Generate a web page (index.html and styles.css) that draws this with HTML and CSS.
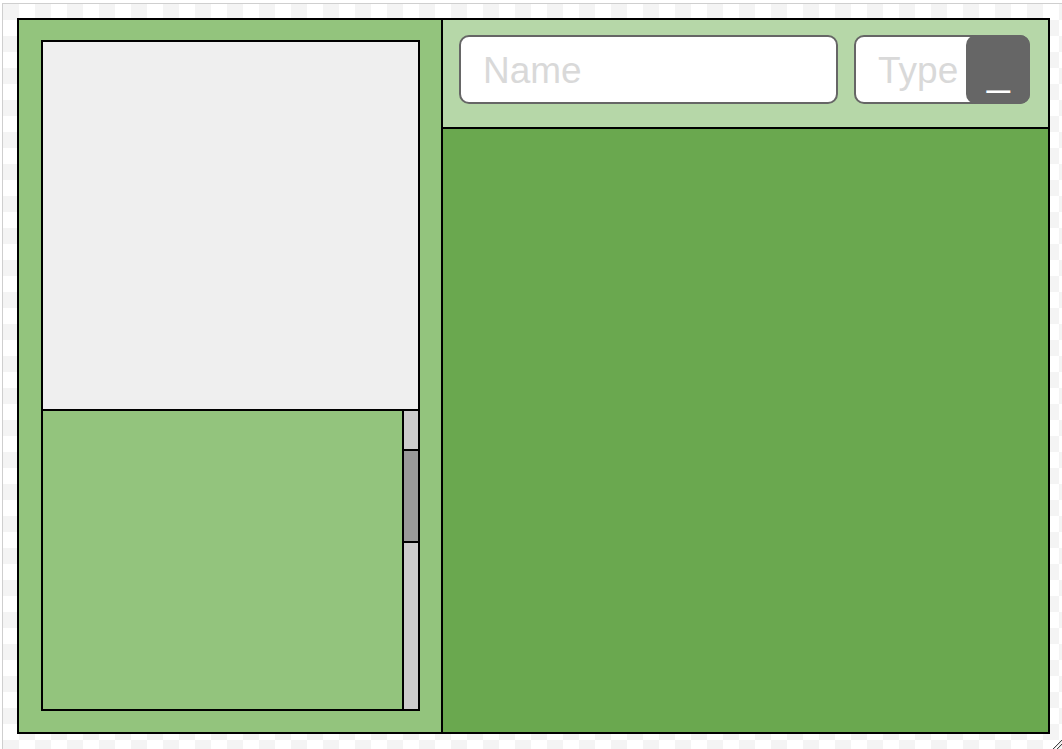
FILE: index.html
```html
<!DOCTYPE html>
<html>
<head>
<meta charset="utf-8">
<link rel="stylesheet" href="styles.css">
</head>
<body>
<div class="frame">
  <div class="app">
    <div class="left">
      <div class="box">
        <div class="preview"></div>
        <div class="list">
          <div class="list-body"></div>
          <div class="scrollbar"><div class="thumb"></div></div>
        </div>
      </div>
    </div>
    <div class="right">
      <div class="header">
        <div class="field name-field"><span class="placeholder">Name</span></div>
        <div class="field type-field"><span class="placeholder">Type</span><div class="drop-btn"><span class="underscore">_</span></div></div>
      </div>
      <div class="canvas"></div>
    </div>
  </div>
  <svg class="resizer" width="10" height="10" viewBox="0 0 10 10">
    <line x1="1" y1="10" x2="10" y2="1" stroke="#444" stroke-width="1"/>
    <line x1="2" y1="10" x2="10" y2="2" stroke="#ddd" stroke-width="1"/>
    <line x1="5" y1="10" x2="10" y2="5" stroke="#444" stroke-width="1"/>
    <line x1="6" y1="10" x2="10" y2="6" stroke="#ddd" stroke-width="1"/>
  </svg>
</div>
</body>
</html>
```
FILE: styles.css
```css
html, body {
  margin: 0;
  padding: 0;
  background: #fff;
  overflow: hidden;
}
.frame {
  position: relative;
  margin: 3px 0 0 2px;
  width: 1060px;
  height: 746px;
  box-sizing: border-box;
  border-left: 1px solid #cfcfcf;
  border-top: 1px solid #cfcfcf;
  padding: 14px 0 0 14px;
  background: repeating-conic-gradient(#ffffff 0 25%, #f4f4f4 0 50%) 0 0 / 32px 32px;
  font-family: "Liberation Sans", Arial, sans-serif;
}
.app {
  width: 1033px;
  height: 716px;
  box-sizing: border-box;
  border: 2px solid #000;
  display: flex;
}
.left {
  width: 424px;
  box-sizing: border-box;
  background: #93c47d;
  border-right: 2px solid #000;
  padding: 20px 21px 21px 22px;
  display: flex;
}
.box {
  flex: 1;
  border: 2px solid #000;
  display: flex;
  flex-direction: column;
}
.preview {
  height: 367px;
  background: #efefef;
  border-bottom: 2px solid #000;
}
.list {
  flex: 1;
  display: flex;
  background: #93c47d;
}
.list-body {
  flex: 1;
}
.scrollbar {
  width: 14px;
  border-left: 2px solid #000;
  background: #cccccc;
}
.thumb {
  margin-top: 38px;
  height: 90px;
  background: #999999;
  border-top: 2px solid #000;
  border-bottom: 2px solid #000;
}
.right {
  flex: 1;
  display: flex;
  flex-direction: column;
}
.header {
  height: 109px;
  box-sizing: border-box;
  background: #b6d7a8;
  border-bottom: 2px solid #000;
  padding: 15px 18px 0 16px;
  display: flex;
  gap: 16px;
  align-items: flex-start;
}
.field {
  position: relative;
  height: 69px;
  box-sizing: border-box;
  border: 2px solid #666;
  border-radius: 10px;
  background: #fff;
  display: flex;
  align-items: center;
  padding-left: 22px;
  padding-top: 3px;
}
.name-field {
  width: 379px;
}
.type-field {
  flex: 1;
}
.placeholder {
  font-size: 37px;
  color: #d9d9d9;
}
.drop-btn {
  position: absolute;
  top: -2px;
  right: -2px;
  width: 64px;
  height: 69px;
  background: #666;
  border-radius: 10px;
}
.underscore {
  position: absolute;
  left: 21px;
  top: 16px;
  font-size: 41px;
  line-height: 1;
  color: #fff;
}
.canvas {
  flex: 1;
  background: #6aa84f;
}
.resizer {
  position: absolute;
  right: 0;
  bottom: 0;
}
```
